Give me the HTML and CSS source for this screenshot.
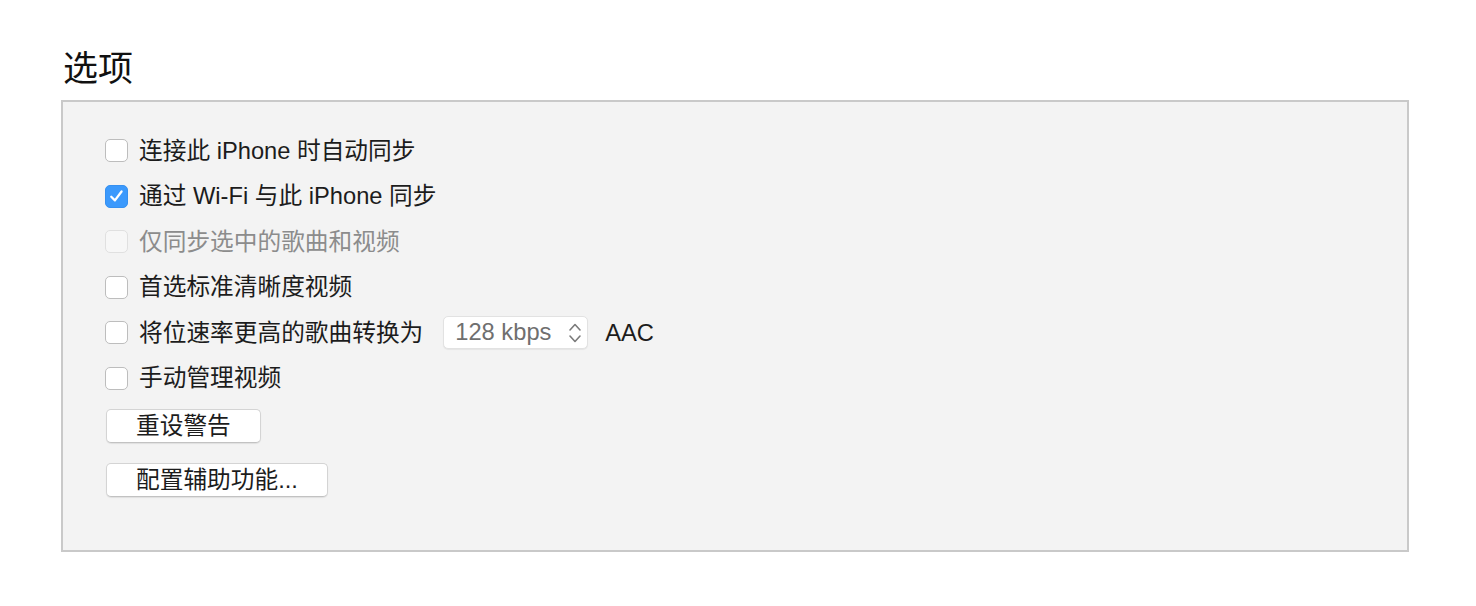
FILE: index.html
```html
<!DOCTYPE html>
<html lang="zh-CN">
<head>
<meta charset="utf-8">
<link rel="stylesheet" href="styles.css">
</head>
<body>
<div class="page">
  <h1 class="title">选项</h1>
  <div class="panel">
    <div class="rows">
      <label class="row"><span class="cb"></span><span class="lbl">连接此 iPhone 时自动同步</span></label>
      <label class="row"><span class="cb checked"><svg viewBox="0 0 24 24" width="22" height="22"><path d="M6 12.8 L10.2 17 L17.8 6.8" fill="none" stroke="#fff" stroke-width="2.6" stroke-linecap="round" stroke-linejoin="round"/></svg></span><span class="lbl">通过 Wi-Fi 与此 iPhone 同步</span></label>
      <label class="row disabled"><span class="cb"></span><span class="lbl">仅同步选中的歌曲和视频</span></label>
      <label class="row"><span class="cb"></span><span class="lbl">首选标准清晰度视频</span></label>
      <div class="row"><span class="cb"></span><span class="lbl">将位速率更高的歌曲转换为</span>
        <span class="select"><span class="sel-text">128 kbps</span><svg class="chev" viewBox="0 0 14 26" width="14" height="26"><path d="M2 10 L7 4.5 L12 10 M2 16 L7 21.5 L12 16" fill="none" stroke="#7a7a7a" stroke-width="1.6" stroke-linecap="round" stroke-linejoin="round"/></svg></span>
        <span class="lbl aac">AAC</span></div>
      <label class="row"><span class="cb"></span><span class="lbl">手动管理视频</span></label>
    </div>
    <div class="buttons">
      <button class="btn">重设警告</button>
      <button class="btn">配置辅助功能...</button>
    </div>
  </div>
</div>
</body>
</html>
```

FILE: styles.css
```css
html, body {
  margin: 0;
  padding: 0;
  background: #ffffff;
}
body {
  font-family: "Liberation Sans", "Noto Sans CJK SC", sans-serif;
  color: #1c1c1c;
}
.page {
  margin-left: 61px;
  width: 1348px;
  padding-top: 44px;
}
.title {
  margin: 0 0 0 2px;
  font-family: "Noto Sans CJK SC", sans-serif;
  font-weight: 400;
  font-size: 35px;
  line-height: 44px;
  height: 56px;
  color: #111;
}
.panel {
  box-sizing: border-box;
  height: 452px;
  background: #f3f3f3;
  border: 2px solid #c9c9c9;
  padding: 26px 0 0 42px;
}
.rows {
  display: flex;
  flex-direction: column;
}
.row {
  display: flex;
  align-items: center;
  height: 45.5px;
  font-size: 23.7px;
}
.lbl {
  font-family: "Liberation Sans", "Noto Sans CJK SC", sans-serif;
  line-height: 30px;
}
.cb {
  box-sizing: border-box;
  width: 23px;
  height: 23px;
  border: 1px solid #bdbdbd;
  border-radius: 5px;
  background: #fff;
  margin-right: 11px;
  flex: none;
  display: flex;
  align-items: center;
  justify-content: center;
}
.cb.checked {
  background: #3b99fc;
  border-color: #3690f0;
}
.cb svg {
  display: block;
  width: 22px;
  height: 22px;
}
.disabled .cb {
  background: #f7f7f7;
  border-color: #e0e0e0;
}
.disabled .lbl {
  color: #8c8c8c;
}
.select {
  box-sizing: border-box;
  margin-left: 20px;
  width: 145px;
  height: 33px;
  background: #fff;
  border: 1px solid #e2e2e2;
  border-radius: 5px;
  box-shadow: 0 1px 1px rgba(0,0,0,0.06);
  display: flex;
  align-items: center;
  justify-content: space-between;
  padding: 0 5px 0 11px;
}
.sel-text {
  color: #6f6f6f;
  font-size: 23.7px;
}
.chev {
  display: block;
}
.aac {
  margin-left: 17px;
}
.buttons {
  display: flex;
  flex-direction: column;
  align-items: flex-start;
  gap: 20px;
  margin-top: 8px;
  margin-left: 1px;
}
.btn {
  box-sizing: border-box;
  height: 34px;
  padding: 0 29px;
  background: #fff;
  border: 1px solid #d4d4d4;
  border-bottom-color: #c2c2c2;
  border-radius: 5px;
  box-shadow: 0 1px 1px rgba(0,0,0,0.08);
  font-family: "Liberation Sans", "Noto Sans CJK SC", sans-serif;
  font-size: 23.7px;
  color: #1c1c1c;
  line-height: 30px;
}
```
